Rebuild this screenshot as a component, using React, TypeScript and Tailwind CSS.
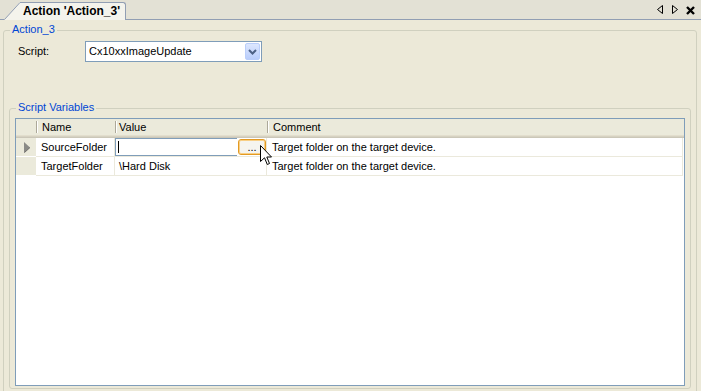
import React from 'react';

const rows = [
  { name: 'SourceFolder', value: '', comment: 'Target folder on the target device.', editing: true },
  { name: 'TargetFolder', value: '\\Hard Disk', comment: 'Target folder on the target device.', editing: false },
];

const Divider = () => <span className="w-px h-[12px] bg-[#aca899] shadow-[1px_0_0_#ffffff] shrink-0" />;

export default function App() {
  return (
    <div className="relative w-[701px] h-[391px] overflow-hidden bg-[#ece9d8] text-black text-[11px] leading-[13px] font-['Liberation_Sans',Arial,sans-serif] flex flex-col">
      {/* document tab strip */}
      <div className="h-[20px] shrink-0 bg-[#e3e1d5] border-b border-[#919eb3] flex items-end">
        <div className="w-[4px]" />
        <svg width="18" height="18" viewBox="0 0 18 18" className="block -mb-px">
          <polygon points="0,18 16,0 18,0 18,18" fill="#f4f3ec" />
          <polyline points="0.5,17.5 16,0.5 18,0.5" fill="none" stroke="#919eb3" />
        </svg>
        <div className="-mb-px h-[18px] bg-[#f4f3ec] border-t border-r border-[#919eb3] rounded-tr-[3px] pl-[1px] pr-[5px] font-bold text-[12px] leading-[17px]">
          Action 'Action_3'
        </div>
        <div className="flex-1" />
        <div className="self-center flex items-center pr-[6px]">
          <svg width="6" height="9" viewBox="0 0 6 9">
            <polygon points="5.5,0.5 5.5,8.5 0.5,4.5" fill="none" stroke="#000" />
          </svg>
          <svg width="6" height="9" viewBox="0 0 6 9" className="ml-[9px]">
            <polygon points="0.5,0.5 0.5,8.5 5.5,4.5" fill="none" stroke="#000" />
          </svg>
          <svg width="9" height="9" viewBox="0 0 9 9" className="ml-[8px] mt-[2px]">
            <path d="M1 1 L8 8 M8 1 L1 8" stroke="#000" strokeWidth="2.4" />
          </svg>
        </div>
      </div>

      {/* Action group */}
      <fieldset className="ml-[3px] mr-[4px] mt-[3px] min-w-0 border border-[#d0d0bf] rounded-[3px] pb-[6px] flex flex-col">
        <legend className="ml-[6px] px-[2px] pb-[2px] text-[#0046d5]">Action_3</legend>

        <div className="mt-[3px] h-[21px] flex items-center pl-[14px]">
          <span className="w-[67px]">Script:</span>
          <div className="w-[177px] h-[21px] bg-white border border-[#7f9db9] flex items-center pl-[3px] pr-px">
            <span>Cx10xxImageUpdate</span>
            <div className="ml-auto w-[15px] h-[17px] rounded-[2px] border border-[#bacefa] bg-gradient-to-b from-[#dde7fe] to-[#b9cdfb] flex items-center justify-center">
              <svg width="9" height="6" viewBox="0 0 9 6">
                <path d="M1 1 L4.5 4.5 L8 1" fill="none" stroke="#4d6185" strokeWidth="2" />
              </svg>
            </div>
          </div>
        </div>

        {/* Script Variables group */}
        <fieldset className="mt-[39px] mx-[5px] min-w-0 border border-[#d0d0bf] rounded-[3px] pb-[2px] flex flex-col">
          <legend className="ml-[6px] px-[2px] pb-[2px] text-[#0046d5]">Script Variables</legend>

          <div className="mt-[2px] mx-[5px] h-[268px] border border-[#7f9db9] bg-white flex flex-col">
            {/* header */}
            <div className="h-[19px] shrink-0 flex bg-[#ebeadb] shadow-[inset_0_-1px_0_#cbc7b8,inset_0_-2px_0_#d6d2c2,inset_0_-3px_0_#e2decd] pb-[3px]">
              <div className="w-[20px]" />
              <div className="w-[79px] flex items-center">
                <Divider />
                <span className="pl-[5px]">Name</span>
              </div>
              <div className="w-[152px] flex items-center">
                <Divider />
                <span className="pl-[3px]">Value</span>
              </div>
              <div className="w-[416px] flex items-center">
                <Divider />
                <span className="pl-[5px]">Comment</span>
                <span className="ml-auto">
                  <Divider />
                </span>
              </div>
            </div>

            {rows.map((r) => (
              <div key={r.name} className="h-[19px] shrink-0 flex">
                <div className="w-[20px] bg-[#ebeadb] border-b border-white flex items-center pl-[8px]">
                  {r.editing && (
                    <svg width="7" height="11" viewBox="0 0 7 11">
                      <polygon points="0,0 6,5.5 0,11" fill="#8a8a86" />
                      <polyline points="0.5,10.5 6,5.5" stroke="#6f6f6b" fill="none" />
                    </svg>
                  )}
                </div>
                <div className="w-[79px] border-b border-r border-[#ebe9dc] flex items-center pl-[5px]">
                  {r.name}
                </div>
                {r.editing ? (
                  <div className="w-[152px] border-b border-r border-[#ebe9dc] flex items-stretch">
                    <div className="w-[123px] border border-[#7f9db9] border-r-0 flex items-center pl-[2px]">
                      <span className="w-px h-[12px] bg-black" />
                    </div>
                    <div className="w-[28px] my-[1px] ml-[1px] rounded-[3px] border border-[#e39a22] bg-[#f5f4ef] shadow-[inset_0_0_0_1px_#f8cf86] flex items-center justify-center leading-[12px]">
                      ...
                    </div>
                  </div>
                ) : (
                  <div className="w-[152px] border-b border-r border-[#ebe9dc] flex items-center pl-[4px]">
                    {r.value}
                  </div>
                )}
                <div className="w-[416px] border-b border-r border-[#ebe9dc] flex items-center pl-[5px]">
                  {r.comment}
                </div>
              </div>
            ))}
          </div>
        </fieldset>
      </fieldset>

      {/* mouse pointer */}
      <svg width="13" height="21" viewBox="0 0 13 21" className="absolute left-[260px] top-[145px]">
        <path d="M0.5 0.5 L0.5 16.5 L4.5 12.8 L7.3 19.5 L9.5 18.5 L6.8 12 L11.5 12 Z" fill="#fff" stroke="#000" strokeLinejoin="miter" />
      </svg>
    </div>
  );
}
